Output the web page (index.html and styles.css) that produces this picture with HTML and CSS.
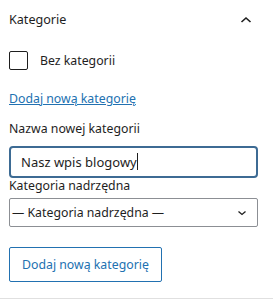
FILE: index.html
```html
<!DOCTYPE html>
<html>
<head>
  <title>Kategorie</title>
<link rel="stylesheet" href="styles.css">
</head>
<body>
  <div class="panel">
    <div class="panel-head">
      <span class="panel-title">Kategorie</span>
      <svg class="toggle" width="24" height="24" viewBox="0 0 24 24"><path d="M7.5 15l4.5-4 4.5 4" fill="none" stroke="#1e1e1e" stroke-width="1.6"/></svg>
    </div>
    <label class="check-row">
      <span class="check"></span>
      <span>Bez kategorii</span>
    </label>
    <a class="add-link" href="#">Dodaj nową kategorię</a>
    <div class="field">
      <label for="newcat">Nazwa nowej kategorii</label>
      <div class="text-input">Nasz wpis blogowy<span class="caret"></span></div>
    </div>
    <div class="field parent">
      <label>Kategoria nadrzędna</label>
      <div class="select">
        <span>— Kategoria nadrzędna —</span>
        <svg width="12" height="12" viewBox="0 0 12 12"><path d="M2.5 4.5l3.5 3 3.5-3" fill="none" stroke="#1e1e1e" stroke-width="1.3"/></svg>
      </div>
    </div>
    <button type="button" class="add-btn">Dodaj nową kategorię</button>
  </div>
</body>
</html>
```

FILE: styles.css
```css
body {
  margin: 0;
  background: #fff;
  font-family: "Noto Sans", "Open Sans", sans-serif;
  font-size: 12.3px;
  color: #1e1e1e;
}

.panel {
  padding: 0 15px 16px 9px;
  border-bottom: 1px solid #e0e0e0;
}

.panel-head {
  display: flex;
  align-items: center;
  justify-content: space-between;
  height: 38px;
}

.panel-title {
  font-size: 12.6px;
}

.check-row {
  display: flex;
  align-items: center;
  gap: 12px;
  margin-top: 12px;
  height: 20px;
}

.check {
  width: 17px;
  height: 17px;
  border: 1.5px solid #1e1e1e;
  border-radius: 2px;
}

.add-link {
  display: block;
  margin-top: 19px;
  color: #2271b1;
  text-decoration: underline;
  line-height: 20px;
}

.field {
  margin-top: 10px;
}

.field label {
  display: block;
  line-height: 20px;
  margin-bottom: 7px;
}

.text-input {
  height: 28px;
  border: 2px solid #3d6b94;
  border-radius: 4px;
  padding: 0 10px;
  line-height: 28px;
  font-size: 13px;
}

.caret {
  display: inline-block;
  width: 1px;
  height: 17px;
  background: #1e1e1e;
  vertical-align: -3px;
}

.parent {
  margin-top: 0;
}

.parent label {
  line-height: 16px;
  margin-bottom: 4px;
}

.select {
  display: flex;
  align-items: center;
  justify-content: space-between;
  height: 27px;
  border: 1px solid #8c8f94;
  border-radius: 2px;
  padding: 0 9px 0 2px;
}

.add-btn {
  margin-top: 20px;
  height: 35px;
  padding: 0 12px;
  border: 1px solid #2271b1;
  border-radius: 2px;
  background: #fff;
  color: #2271b1;
  font-family: inherit;
  font-size: 12.3px;
}
```
